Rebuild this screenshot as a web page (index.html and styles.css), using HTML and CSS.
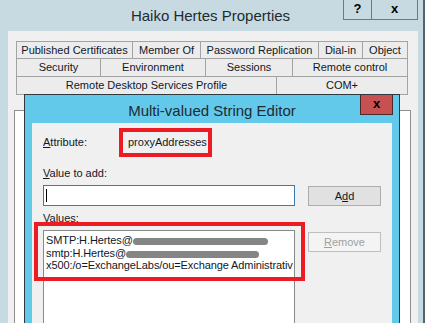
FILE: index.html
```html
<!DOCTYPE html>
<html lang="en">
<head>
    <meta charset="UTF-8">
    <title>Haiko Hertes Properties</title>
    <link rel="stylesheet" href="styles.css">
</head>
<body>
    <div class="window">
        <div class="titlebar">
            <div class="title">Haiko Hertes Properties</div>
            <div class="controls">
                <span class="ctl help">?</span>
                <span class="ctl close">x</span>
            </div>
        </div>
        <div class="panel">
            <div class="tabs">
                <div class="tab-row row1">
                    <div class="tab">Published Certificates</div>
                    <div class="tab">Member Of</div>
                    <div class="tab">Password Replication</div>
                    <div class="tab">Dial-in</div>
                    <div class="tab">Object</div>
                </div>
                <div class="tab-row row2">
                    <div class="tab">Security</div>
                    <div class="tab">Environment</div>
                    <div class="tab">Sessions</div>
                    <div class="tab">Remote control</div>
                </div>
                <div class="tab-row row3">
                    <div class="tab">Remote Desktop Services Profile</div>
                    <div class="tab">COM+</div>
                </div>
            </div>
            <div class="page"></div>
        </div>

        <!-- modal editor on top of the properties sheet -->
        <div class="dialog">
            <div class="dlg-titlebar">
                <div class="dlg-title">Multi-valued String Editor</div>
                <span class="dlg-close">x</span>
            </div>
            <div class="dlg-body">
                <div class="attr-row">
                    <span class="label attr-label"><u>A</u>ttribute:</span>
                    <span class="attr-value">proxyAddresses</span>
                </div>
                <div class="label"><u>V</u>alue to add:</div>
                <div class="field-row">
                    <div class="input"><span class="caret"></span></div>
                    <button class="btn">A<u>d</u>d</button>
                </div>
                <div class="label values-label">Values:</div>
                <div class="field-row">
                    <div class="listbox">
                        <div class="item">SMTP:H.Hertes@<span class="redact r1"></span></div>
                        <div class="item">smtp:H.Hertes@<span class="redact r2"></span></div>
                        <div class="item">x500:/o=ExchangeLabs/ou=Exchange Administrativ</div>
                    </div>
                    <button class="btn disabled"><u>R</u>emove</button>
                </div>
                <div class="mark mark-attr"></div>
                <div class="mark mark-values"></div>
            </div>
        </div>
    </div>
</body>
</html>
```

FILE: styles.css
```css
* {
    box-sizing: border-box;
    margin: 0;
    padding: 0;
}

body {
    font-family: "Liberation Sans", Arial, sans-serif;
    font-size: 11px;
    color: #101828;
    background-color: #c8dae1;
    overflow: hidden;
}

.window {
    position: relative;
    width: 425px;
    height: 323px;
    background-color: #c8dae1;
    border-right: 2px solid #56636a;
    padding: 0 5px 0 8px;
    overflow: hidden;
}

.titlebar {
    display: flex;
    height: 31px;
}

.title {
    flex: 1;
    text-align: center;
    font-size: 15px;
    color: #1d2b33;
    padding: 7px 0 0 70px;
}

.controls {
    display: flex;
    align-items: flex-start;
}

.ctl {
    height: 20px;
    border: 1px solid #6b7a82;
    border-top: none;
    text-align: center;
    font-weight: bold;
    font-size: 13px;
    line-height: 18px;
    color: #000;
}

.help {
    width: 29px;
}

.close {
    width: 46px;
    border-left: none;
}

.panel {
    background-color: #f0f0f0;
    height: 292px;
    padding: 10px 0 0 6px;
}

.tabs {
    margin-left: 2px;
    width: 392px;
}

.tab-row {
    display: grid;
}

.row1 {
    grid-template-columns: 116px 68px 118px 44px 46px;
    height: 17px;
}

.row2 {
    grid-template-columns: 84px 105px 87px 116px;
    height: 18px;
}

.row3 {
    grid-template-columns: 260px 132px;
    height: 19px;
    border-bottom: 1px solid #a3a3a3;
}

.tab {
    background-color: #ececec;
    border-top: 1px solid #a3a3a3;
    border-left: 1px solid #a3a3a3;
    text-align: center;
    line-height: 16px;
    white-space: nowrap;
    color: #101828;
}

.tab:last-child {
    border-right: 1px solid #a3a3a3;
}

.page {
    margin-top: 15px;
    width: 397px;
    height: 220px;
    background-color: #fff;
    border: 1px solid #8f8f8f;
}

.dialog {
    position: absolute;
    left: 24px;
    top: 94px;
    width: 376px;
    height: 240px;
    background-color: #63c9ea;
    border: 1px solid #2d3a40;
    padding: 0 7px;
}

.dlg-titlebar {
    position: relative;
    height: 28px;
}

.dlg-title {
    text-align: center;
    font-size: 15px;
    color: #1d2b33;
    padding-top: 7px;
}

.dlg-close {
    position: absolute;
    right: -1px;
    top: 0;
    width: 33px;
    height: 20px;
    background-color: #c75050;
    border: 1px solid #4a2a2a;
    border-top: none;
    text-align: center;
    font-weight: bold;
    font-size: 13px;
    line-height: 17px;
    color: #000;
}

.dlg-body {
    position: relative;
    background-color: #f0f0f0;
    height: 220px;
    padding: 13px 0 0 11px;
}

.label {
    line-height: 13px;
    color: #101828;
}

.attr-row {
    display: flex;
    height: 31px;
}

.attr-label {
    width: 85px;
}

.attr-value {
    line-height: 13px;
}

.field-row {
    display: flex;
    align-items: flex-start;
    gap: 13px;
    margin-top: 5px;
}

.input {
    width: 252px;
    height: 21px;
    background-color: #fff;
    border: 1px solid #3d7bad;
    padding: 3px 0 0 2px;
}

.caret {
    display: block;
    width: 1px;
    height: 13px;
    background-color: #000;
}

.btn {
    width: 73px;
    height: 20px;
    margin-top: 1px;
    font-family: inherit;
    font-size: 11px;
    background-color: #e1e1e1;
    border: 1px solid #adadad;
    color: #101828;
}

.btn.disabled {
    margin-top: 2px;
    background-color: #f4f4f4;
    border-color: #bfbfbf;
    color: #a0a0a0;
}

.values-label {
    margin-top: 6px;
}

.listbox {
    width: 252px;
    height: 120px;
    background-color: #fff;
    border: 1px solid #8a8a8a;
    padding: 3px 0 0 2px;
}

.item {
    line-height: 12.5px;
    white-space: nowrap;
    letter-spacing: -0.1px;
    color: #101828;
}

.redact {
    display: inline-block;
    height: 7px;
    background-color: #858585;
    border-radius: 4px;
    vertical-align: -1px;
}

.r1 {
    width: 135px;
}

.r2 {
    width: 133px;
}

.mark {
    position: absolute;
    border: 4px solid #ed1c24;
}

.mark-attr {
    left: 87px;
    top: 5px;
    width: 93px;
    height: 29px;
}

.mark-values {
    left: 2px;
    top: 99px;
    width: 271px;
    height: 59px;
}
```
